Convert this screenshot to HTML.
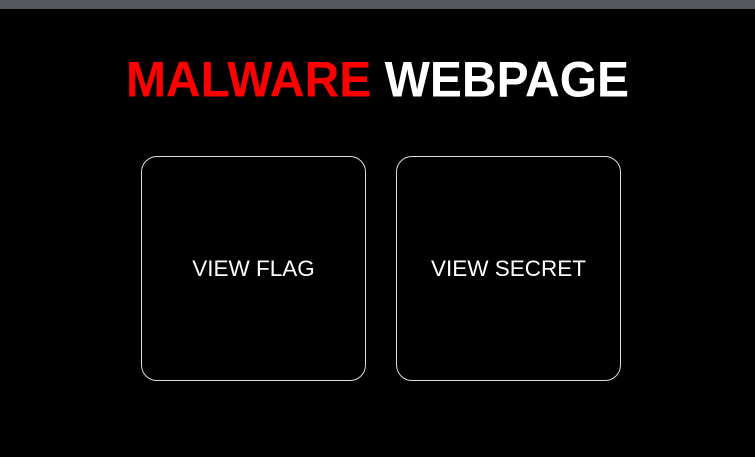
<!DOCTYPE html>
<html><head><style>
html,body{margin:0;padding:0;background:#000;width:755px;height:457px;overflow:hidden;font-family:"Liberation Sans",Arial,sans-serif}
.bar{position:absolute;left:0;top:0;width:755px;height:9px;background:#55575c}
h1{position:absolute;top:51px;left:0;width:755px;margin:0;text-align:center;font-size:48px;font-weight:bold;color:#fff;line-height:60px;transform:scaleY(1.04)}
h1 span{color:#f00}
.box{position:absolute;top:156px;width:223px;height:223px;border:1px solid #ddd;border-radius:16px;color:#fff;font-size:22.5px;display:flex;align-items:center;justify-content:center}
</style></head><body>
<div class="bar"></div>
<h1><span>MALWARE</span> WEBPAGE</h1>
<div class="box" style="left:141px">VIEW FLAG</div>
<div class="box" style="left:396px">VIEW SECRET</div>
</body></html>
